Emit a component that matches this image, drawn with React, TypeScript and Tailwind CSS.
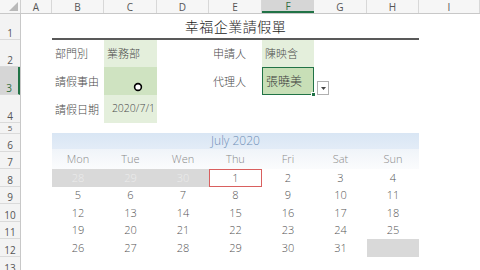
import React from "react";

const cols = ["A", "B", "C", "D", "E", "F", "G", "H", "I"];
const colW = ["w-[31px]", "w-[52px]", "w-[53px]", "w-[52px]", "w-[53px]", "w-[52px]", "w-[53px]", "w-[52px]", "flex-1"];
const rowH: [string, string][] = [
  ["1", "h-[26px]"],
  ["2", "h-[27px]"],
  ["3", "h-[28px]"],
  ["4", "h-[28px]"],
  ["5", "h-[11px]"],
  ["6", "h-[18px]"],
  ["7", "h-[17px]"],
  ["8", "h-[18px]"],
  ["9", "h-[17px]"],
  ["10", "h-[18px]"],
  ["11", "h-[17px]"],
  ["12", "h-[18px]"],
  ["13", "h-[18px]"],
];

const cjk = "font-['Noto_Sans_CJK_TC','Noto_Sans',sans-serif]";
const num = "font-['Open_Sans','Noto_Sans',sans-serif]";

const weeks: (number | null)[][] = [
  [5, 6, 7, 8, 9, 10, 11],
  [12, 13, 14, 15, 16, 17, 18],
  [19, 20, 21, 22, 23, 24, 25],
  [26, 27, 28, 29, 30, 31, null],
];

const rowCls = "grid grid-cols-[52px_53px_52px_53px_52px_53px_52px]";

export default function App() {
  return (
    <div className="w-[480px] h-[270px] overflow-hidden bg-white flex flex-col select-none">
      {/* column header */}
      <div className="flex h-[14px] bg-[#f6f6f6] border-b border-[#c8c8c8] shrink-0">
        <div className="w-[21px] border-r border-[#cfcfcf] relative">
          <svg className="absolute right-[2px] bottom-[2px]" width="9" height="9" viewBox="0 0 9 9">
            <polygon points="9,0 9,9 0,9" fill="#b9b9b9" />
          </svg>
        </div>
        {cols.map((c, i) => (
          <div
            key={c}
            className={`${colW[i]} flex items-center justify-center text-[10px] leading-none ${num} ${
              c === "F"
                ? "bg-[#d6d6d6] text-[#2f6e3f] border-b-2 border-[#217346]"
                : "text-[#555] border-r border-[#d8d8d8]"
            }`}
          >
            {c}
          </div>
        ))}
      </div>

      <div className="flex flex-1">
        {/* row header */}
        <div className="w-[21px] flex flex-col bg-[#f3f3f3] border-r border-[#c8c8c8] shrink-0">
          {rowH.map(([n, h]) => (
            <div
              key={n}
              className={`${h} shrink-0 flex items-end justify-center pb-[1px] leading-none ${num} border-b border-[#dadada] ${
                n === "5" ? "text-[8px]" : "text-[10px]"
              } ${n === "3" ? "bg-[#d6d6d6] text-[#2f6e3f] border-r-2 border-r-[#217346]" : "text-[#555]"}`}
            >
              {n}
            </div>
          ))}
        </div>

        {/* sheet body */}
        <div className="flex flex-col flex-1">
          {/* row 1: title */}
          <div className="h-[26px] flex shrink-0">
            <div className="w-[31px]" />
            <div className={`w-[367px] flex items-center justify-center border-b-2 border-[#595959] text-[14px] font-light text-[#1a1a1a] tracking-[0.5px] ${cjk}`}>
              幸福企業請假單
            </div>
          </div>
          {/* row 2 */}
          <div className={`h-[27px] flex shrink-0 text-[11px] font-light text-[#4a4a4a] ${cjk}`}>
            <div className="w-[31px]" />
            <div className="w-[52px] flex items-center pl-[3px]">部門別</div>
            <div className="w-[53px] flex items-center pl-[3px] bg-[#e4efdc]">業務部</div>
            <div className="w-[52px]" />
            <div className="w-[53px] flex items-center pl-[4px]">申請人</div>
            <div className="w-[52px] flex items-center pl-[3px] bg-[#e4efdc]">陳映含</div>
          </div>
          {/* row 3 */}
          <div className={`h-[28px] flex shrink-0 text-[11px] font-light text-[#4a4a4a] ${cjk}`}>
            <div className="w-[31px]" />
            <div className="w-[52px] flex items-center pl-[3px]">請假事由</div>
            <div className="w-[53px] flex items-end justify-center pb-[3px] bg-[#cfe3c1]">
              <svg width="10" height="10" viewBox="0 0 10 10" className="ml-[14px]">
                <circle cx="5" cy="5" r="3.4" fill="white" stroke="black" strokeWidth="1.6" />
              </svg>
            </div>
            <div className="w-[52px]" />
            <div className="w-[53px] flex items-center pl-[4px]">代理人</div>
            <div className="w-[52px] relative flex items-center pl-[3px] bg-[#c8dfb7] border border-[#217346] text-[12px] text-[#3a3a3a]">
              張曉美
              <div className="absolute right-[-3px] bottom-[-3px] w-[5px] h-[5px] bg-[#217346] border border-white" />
              <div className="absolute left-[54px] bottom-[-1px] w-[12px] h-[14px] bg-white border border-[#b0b0b0] flex items-center justify-center">
                <svg width="5" height="3" viewBox="0 0 5 3">
                  <polygon points="0,0 5,0 2.5,3" fill="#444" />
                </svg>
              </div>
            </div>
          </div>
          {/* row 4 */}
          <div className={`h-[28px] flex shrink-0 text-[11px] font-light text-[#4a4a4a] ${cjk}`}>
            <div className="w-[31px]" />
            <div className="w-[52px] flex items-center pl-[3px]">請假日期</div>
            <div className={`w-[53px] flex items-center justify-end pr-[2px] bg-[#e4efdc] text-[10.5px] ${num}`}>2020/7/1</div>
          </div>
          {/* row 5 */}
          <div className="h-[10px] shrink-0" />

          {/* calendar */}
          <div className={`ml-[31px] w-[367px] flex flex-col font-light ${num}`}>
            <div className="h-[16px] flex items-center justify-center bg-gradient-to-b from-[#d9e6f4] to-[#e3ecf7] text-[12px] text-[#6f8fb6]">
              July 2020
            </div>
            <div className={`${rowCls} h-[20px] bg-gradient-to-b from-[#f0f4f9] to-[#fbfcfd] text-[11px] text-[#8a8a8a]`}>
              {["Mon", "Tue", "Wen", "Thu", "Fri", "Sat", "Sun"].map((d) => (
                <div key={d} className="flex items-center justify-center">{d}</div>
              ))}
            </div>
            <div className={`${rowCls} h-[18px] text-[11px]`}>
              {[28, 29, 30].map((d) => (
                <div key={d} className="bg-[#d9d9d9] flex items-center justify-center text-[#ececec]">{d}</div>
              ))}
              <div className="shadow-[inset_0_0_0_1px_#d9605f] flex items-center justify-center text-[#555]">1</div>
              {[2, 3, 4].map((d) => (
                <div key={d} className="flex items-center justify-center text-[#555]">{d}</div>
              ))}
            </div>
            {weeks.map((w, i) => (
              <div key={i} className={`${rowCls} ${i % 2 === 0 ? "h-[17px]" : "h-[18px]"} text-[11px] text-[#555]`}>
                {w.map((d, j) =>
                  d === null ? (
                    <div key={j} className="bg-[#d9d9d9]" />
                  ) : (
                    <div key={j} className="flex items-center justify-center">{d}</div>
                  )
                )}
              </div>
            ))}
          </div>
        </div>
      </div>
    </div>
  );
}
